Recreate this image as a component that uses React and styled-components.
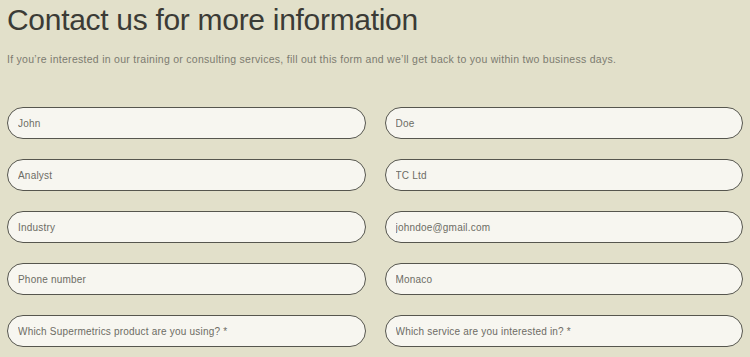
import React from 'react'
import styled, { createGlobalStyle } from 'styled-components'

const GlobalStyle = createGlobalStyle`
  html, body {
    margin: 0;
    padding: 0;
    background: #e2e0ca;
  }
  body {
    font-family: "Liberation Sans", Arial, sans-serif;
  }
`

const Page = styled.section`
  width: 750px;
  height: 357px;
  box-sizing: border-box;
  padding: 0 7px;
  background: #e2e0ca;
  overflow: hidden;
`

const Title = styled.h1`
  margin: 0;
  padding-top: 3px;
  font-size: 30px;
  line-height: 34px;
  font-weight: 400;
  color: #3b3b36;
  letter-spacing: -0.3px;
`

const Lead = styled.p`
  margin: 15px 0 0;
  font-size: 10.5px;
  line-height: 14px;
  color: #7c7b70;
  letter-spacing: 0.28px;
`

const FormGrid = styled.form`
  margin-top: 41px;
  display: grid;
  grid-template-columns: 1fr 1fr;
  column-gap: 19px;
  row-gap: 20px;
`

const Field = styled.input`
  box-sizing: border-box;
  width: 100%;
  height: 32px;
  padding: 0 10px;
  border: 1px solid #56564e;
  border-radius: 16px;
  background: #f7f6f0;
  font-family: "Liberation Sans", Arial, sans-serif;
  font-size: 10px;
  letter-spacing: 0.2px;
  color: #5f5e57;
  outline: none;

  &::placeholder {
    color: #6d6c64;
  }
`

const fields = [
  'John',
  'Doe',
  'Analyst',
  'TC Ltd',
  'Industry',
  'johndoe@gmail.com',
  'Phone number',
  'Monaco',
  'Which Supermetrics product are you using? *',
  'Which service are you interested in? *',
]

export default function App() {
  return (
    <Page>
      <GlobalStyle />
      <Title>Contact us for more information</Title>
      <Lead>
        If you’re interested in our training or consulting services, fill out this form and we’ll get back to you within two business days.
      </Lead>
      <FormGrid>
        {fields.map((f) => (
          <Field key={f} placeholder={f} readOnly />
        ))}
      </FormGrid>
    </Page>
  )
}
